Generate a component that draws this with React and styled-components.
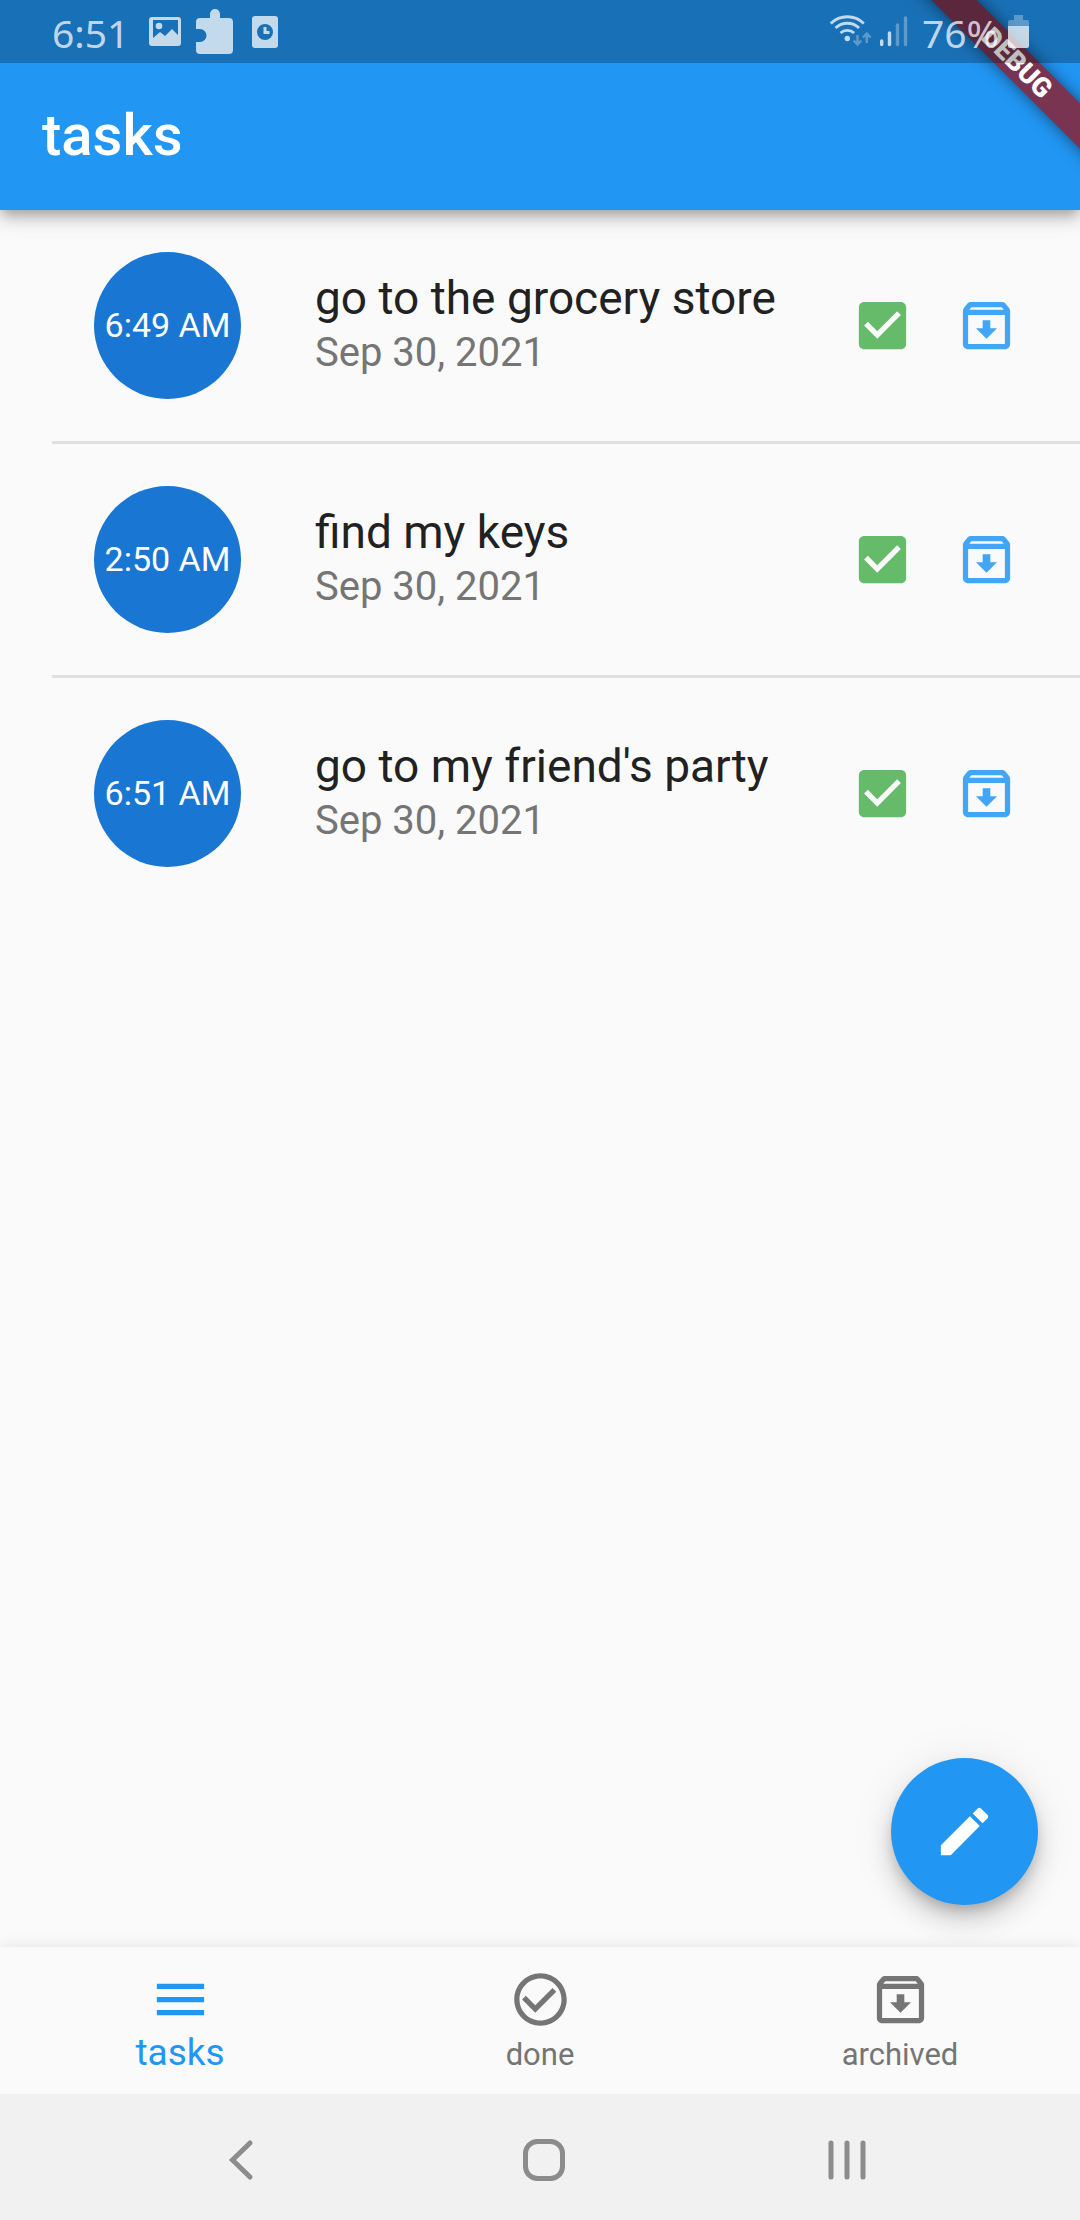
import React, { useState } from 'react';
import styled, { createGlobalStyle } from 'styled-components';

const GlobalStyle = createGlobalStyle`
  *, *::before, *::after { box-sizing: border-box; }
  body {
    margin: 0;
    background: #fafafa;
    font-family: Roboto, "Liberation Sans", sans-serif;
    color: #212121;
  }
  button {
    border: 0;
    padding: 0;
    background: none;
    font: inherit;
    color: inherit;
    cursor: pointer;
  }
`;

const Screen = styled.div`
  position: relative;
  display: flex;
  flex-direction: column;
  min-height: 100vh;
`;

const Header = styled.header`
  position: relative;
  background: #2196f3;
  box-shadow:
    0 5px 10px -3px rgba(0, 0, 0, 0.2),
    0 10px 13px 0 rgba(0, 0, 0, 0.14),
    0 3px 26px 0 rgba(0, 0, 0, 0.12);
`;

const StatusBar = styled.div`
  position: relative;
  z-index: 2;
  display: flex;
  align-items: center;
  justify-content: space-between;
  height: 63px;
  padding: 2px 50px 0 52px;
  background: rgba(0, 0, 0, 0.25);
  color: rgba(255, 255, 255, 0.74);
  font-family: "Noto Sans", sans-serif;
  font-size: 39px;
  line-height: 62px;
`;

const StatusGroup = styled.div`
  display: flex;
  align-items: center;
  gap: ${(p) => p.$gap}px;

  svg { margin-top: -2px; }
`;

const AppBar = styled.div`
  display: flex;
  align-items: center;
  height: 147px;
  padding: 0 42px 4px;
`;

const Title = styled.h1`
  margin: 0;
  color: #fff;
  font-size: 58px;
  font-weight: 500;
  line-height: 68px;
`;

const BannerCorner = styled.div`
  position: absolute;
  top: 0;
  right: 0;
  width: 210px;
  height: 210px;
  overflow: hidden;
  pointer-events: none;
`;

const BannerRibbon = styled.div`
  position: absolute;
  top: 47px;
  left: -3px;
  width: 300px;
  height: 32px;
  transform: rotate(45deg);
  background: rgba(140, 30, 45, 0.82);
  box-shadow: 0 0 16px rgba(0, 0, 0, 0.5);
  color: #fff;
  font-size: 27px;
  font-weight: 900;
  line-height: 32px;
  text-align: center;
`;

const TaskList = styled.ul`
  flex: 1;
  margin: 0;
  padding: 0;
  list-style: none;
`;

const TaskItem = styled.li`
  display: flex;
  align-items: center;
  padding: 42px 42px 42px 94px;
  position: relative;

  & + &::before {
    content: "";
    position: absolute;
    top: -3px;
    left: 52px;
    right: 0;
    height: 3px;
    background: #e0e0e0;
  }
  & + & {
    margin-top: 3px;
  }
`;

const TimeBadge = styled.time`
  flex: none;
  display: grid;
  place-items: center;
  width: 147px;
  height: 147px;
  padding-bottom: 2px;
  border-radius: 50%;
  background: #1976d2;
  color: #fff;
  font-size: 34px;
  line-height: 40px;
  white-space: nowrap;
`;

const TaskText = styled.div`
  flex: 1;
  min-width: 0;
  margin-left: 74px;
  padding-bottom: 4px;
`;

const TaskTitle = styled.h2`
  margin: 0;
  font-size: 46px;
  font-weight: 400;
  line-height: 58px;
`;

const TaskDate = styled.p`
  margin: 0;
  color: #757575;
  font-size: 40px;
  line-height: 52px;
`;

const DoneToggle = styled.label`
  display: grid;
  place-items: center;
  width: 104px;
  height: 104px;
  color: #66bb6a;
  cursor: pointer;

  & > * { grid-area: 1 / 1; }
`;

const DoneInput = styled.input`
  width: 48px;
  height: 48px;
  margin: 0;
  opacity: 0;
`;

const ArchiveButton = styled.button`
  display: grid;
  place-items: center;
  width: 104px;
  height: 104px;
  color: #42a5f5;
`;

const Footer = styled.footer`
  position: sticky;
  bottom: 0;
`;

const Fab = styled.button`
  position: absolute;
  right: 42px;
  bottom: 315px;
  display: grid;
  place-items: center;
  width: 147px;
  height: 147px;
  border-radius: 50%;
  background: #2196f3;
  color: #fff;
  box-shadow:
    0 8px 13px -3px rgba(0, 0, 0, 0.2),
    0 16px 26px 0 rgba(0, 0, 0, 0.14),
    0 3px 47px 0 rgba(0, 0, 0, 0.08);
`;

const BottomNav = styled.nav`
  position: relative;
  display: flex;
  height: 147px;
  background: #fafafa;
  box-shadow: 0 -2px 14px rgba(0, 0, 0, 0.08);
`;

const NavItem = styled.button`
  flex: 1;
  display: flex;
  flex-direction: column;
  align-items: center;
  padding-top: 21px;
  color: ${(p) => (p.$active ? '#2196f3' : '#757575')};
`;

const NavLabel = styled.span`
  font-size: ${(p) => (p.$active ? 37 : 31)}px;
  line-height: ${(p) => (p.$active ? 44 : 48)}px;
`;

const SystemNav = styled.div`
  position: relative;
  display: flex;
  height: 126px;
  padding: 6px 82px 0 90px;
  background: #f1f1f1;
  color: #8c8c8c;
`;

const SystemButton = styled.button`
  flex: 1;
  display: grid;
  place-items: center;
`;

const paths = {
  check:
    'M19 3H5c-1.11 0-2 .9-2 2v14c0 1.1.89 2 2 2h14c1.11 0 2-.9 2-2V5c0-1.1-.89-2-2-2zm-9 14l-5-5 1.41-1.41L10 14.17l7.59-7.59L19 8l-9 9z',
  box: 'M19 5v14H5V5h14m0-2H5c-1.1 0-2 .9-2 2v14c0 1.1.9 2 2 2h14c1.1 0 2-.9 2-2V5c0-1.1-.9-2-2-2z',
  archive:
    'M20.54 5.23l-1.39-1.68C18.88 3.21 18.47 3 18 3H6c-.47 0-.88.21-1.16.55L3.46 5.23C3.17 5.57 3 6.02 3 6.5V19c0 1.1.9 2 2 2h14c1.1 0 2-.9 2-2V6.5c0-.48-.17-.93-.46-1.27zM6.24 5h11.52l.83 1H5.42l.82-1zM5 19V8h14v11H5zm8.45-9h-2.9v3H8l4 4 4-4h-2.55z',
  menu: 'M3 18h18v-2H3v2zm0-5h18v-2H3v2zm0-7v2h18V6H3z',
  done:
    'M16.59 7.58L10 14.17l-3.59-3.58L5 12l5 5 8-8-1.41-1.42zM12 2C6.48 2 2 6.48 2 12s4.48 10 10 10 10-4.48 10-10S17.52 2 12 2zm0 18c-4.42 0-8-3.58-8-8s3.58-8 8-8 8 3.58 8 8-3.58 8-8 8z',
  edit:
    'M3 17.25V21h3.75L17.81 9.94l-3.75-3.75L3 17.25zM20.71 7.04c.39-.39.39-1.02 0-1.41l-2.34-2.34c-.39-.39-1.02-.39-1.41 0l-1.83 1.83 3.75 3.75 1.83-1.83z',
};

const Icon = ({ name }) => (
  <svg width="63" height="63" viewBox="0 0 24 24" fill="currentColor" aria-hidden="true">
    <path d={paths[name]} />
  </svg>
);

const NotificationIcons = () => (
  <svg width="130" height="63" viewBox="148 0 130 63" fill="currentColor" aria-hidden="true">
    <path
      fillRule="evenodd"
      d="M151 17h26a3 3 0 0 1 3 3v23a3 3 0 0 1-3 3h-26a3 3 0 0 1-3-3V20a3 3 0 0 1 3-3zM152 20v18l7-6 5 4 7-7 6 6V20z"
    />
    <circle cx="158" cy="26" r="3.3" />
    <path d="M199 18h10v-4a5 5 0 0 1 10 0v4h9a4 4 0 0 1 4 4v28a4 4 0 0 1-4 4h-29a4 4 0 0 1-4-4v-8h4a6 6 0 0 0 0-13h-4v-7a4 4 0 0 1 4-4z" />
    <path
      fillRule="evenodd"
      d="M254 16h20a3 3 0 0 1 3 3v26a3 3 0 0 1-3 3h-20a3 3 0 0 1-3-3V19a3 3 0 0 1 3-3zM264 24a8 8 0 1 0 0 16a8 8 0 1 0 0-16zM262.500 27h3v4h3v3h-6z"
    />
  </svg>
);

const ConnectionIcons = () => (
  <svg width="78" height="63" viewBox="829 0 78 63" fill="none" stroke="currentColor" aria-hidden="true">
    <g strokeWidth="2.800">
      <path d="M829.800 23.500a23.500 23.500 0 0 1 33 0" />
      <path d="M834.500 28a17 17 0 0 1 23.600 0" />
      <path d="M839.500 33a10 10 0 0 1 13.600 0" />
    </g>
    <circle cx="846.300" cy="38.500" r="2.700" fill="currentColor" stroke="none" />
    <g strokeWidth="2.500" opacity="0.400">
      <path d="M856.500 35v9.500m-3.800-4l3.800 4 3.800-4" />
      <path d="M865.800 43v-9.500m-3.800 4l3.800-4 3.800 4" />
    </g>
    <g strokeWidth="3.400" strokeLinecap="round">
      <path d="M880.700 41v3.500M888.500 33v11.500" />
      <path d="M896.500 25v19.500M904.500 18v26.500" opacity="0.400" />
    </g>
  </svg>
);

const BatteryIcon = () => (
  <svg width="22" height="63" viewBox="1007 0 22 63" fill="currentColor" aria-hidden="true">
    <path d="M1013 15h9v5h4a2 2 0 0 1 2 2v4h-21v-4a2 2 0 0 1 2-2h4z" opacity="0.400" />
    <path d="M1007 26h21v20a2 2 0 0 1-2 2h-17a2 2 0 0 1-2-2z" />
  </svg>
);

const initialTasks = [
  { id: 1, time: '6:49 AM', title: 'go to the grocery store', date: 'Sep 30, 2021', done: true },
  { id: 2, time: '2:50 AM', title: 'find my keys', date: 'Sep 30, 2021', done: true },
  { id: 3, time: '6:51 AM', title: "go to my friend's party", date: 'Sep 30, 2021', done: true },
];

const tabs = [
  { id: 'tasks', icon: 'menu' },
  { id: 'done', icon: 'done' },
  { id: 'archived', icon: 'archive' },
];

export default function App() {
  const [tasks, setTasks] = useState(initialTasks);
  const [tab, setTab] = useState('tasks');

  const toggle = (id) =>
    setTasks((list) => list.map((t) => (t.id === id ? { ...t, done: !t.done } : t)));

  return (
    <>
      <GlobalStyle />
      <Screen>
        <Header>
          <StatusBar>
            <StatusGroup $gap={20}>
              <span>6:51</span>
              <NotificationIcons />
            </StatusGroup>
            <StatusGroup $gap={14}>
              <ConnectionIcons />
              <StatusGroup $gap={9}>
                <span>76%</span>
                <BatteryIcon />
              </StatusGroup>
            </StatusGroup>
          </StatusBar>
          <AppBar>
            <Title>{tab}</Title>
          </AppBar>
          <BannerCorner>
            <BannerRibbon>DEBUG</BannerRibbon>
          </BannerCorner>
        </Header>

        <TaskList>
          {tasks.map((task) => (
            <TaskItem key={task.id}>
              <TimeBadge>{task.time}</TimeBadge>
              <TaskText>
                <TaskTitle>{task.title}</TaskTitle>
                <TaskDate>{task.date}</TaskDate>
              </TaskText>
              <DoneToggle>
                <DoneInput
                  type="checkbox"
                  aria-label={`Done: ${task.title}`}
                  checked={task.done}
                  onChange={() => toggle(task.id)}
                />
                <Icon name={task.done ? 'check' : 'box'} />
              </DoneToggle>
              <ArchiveButton type="button" aria-label={`Archive: ${task.title}`}>
                <Icon name="archive" />
              </ArchiveButton>
            </TaskItem>
          ))}
        </TaskList>

        <Footer>
          <Fab type="button" aria-label="Add task">
            <Icon name="edit" />
          </Fab>
          <BottomNav>
            {tabs.map(({ id, icon }) => (
              <NavItem key={id} type="button" $active={id === tab} onClick={() => setTab(id)}>
                <Icon name={icon} />
                <NavLabel $active={id === tab}>{id}</NavLabel>
              </NavItem>
            ))}
          </BottomNav>
          <SystemNav>
            <SystemButton type="button" aria-label="Back">
              <svg width="28" height="44" viewBox="0 0 28 44" fill="none" stroke="currentColor" strokeWidth="5" strokeLinecap="round">
                <path d="M23 5L5.500 22L23 39" />
              </svg>
            </SystemButton>
            <SystemButton type="button" aria-label="Home">
              <svg width="42" height="42" viewBox="0 0 42 42" fill="none" stroke="currentColor" strokeWidth="5">
                <rect x="2.500" y="2.500" width="37" height="37" rx="12" />
              </svg>
            </SystemButton>
            <SystemButton type="button" aria-label="Recent apps">
              <svg width="38" height="40" viewBox="0 0 38 40" stroke="currentColor" strokeWidth="5" strokeLinecap="round">
                <path d="M3 3v34M19 3v34M35 3v34" />
              </svg>
            </SystemButton>
          </SystemNav>
        </Footer>
      </Screen>
    </>
  );
}
